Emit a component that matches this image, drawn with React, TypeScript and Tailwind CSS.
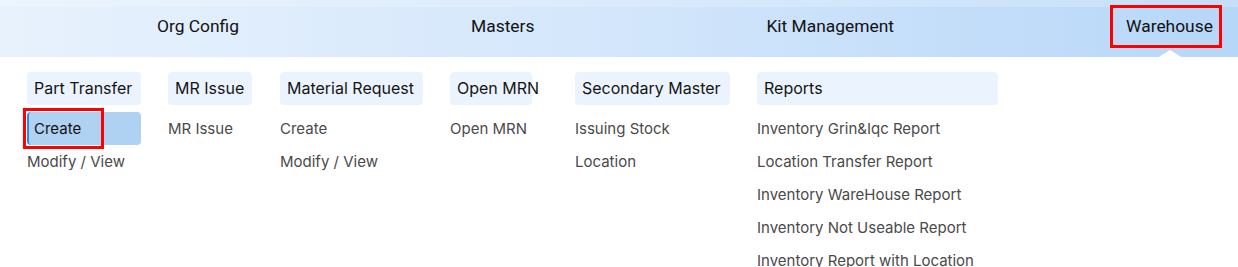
import React from 'react';

type Column = {
  title: string;
  items: string[];
  width: string;
  gap: string;
  active?: number;
};

const navItems = ['Org Config', 'Masters', 'Kit Management', 'Warehouse'];

const columns: Column[] = [
  { title: 'Part Transfer', items: ['Create', 'Modify / View'], width: 'w-[114px]', gap: 'mr-[27px]', active: 0 },
  { title: 'MR Issue', items: ['MR Issue'], width: 'w-[84px]', gap: 'mr-[28px]' },
  { title: 'Material Request', items: ['Create', 'Modify / View'], width: 'w-[143px]', gap: 'mr-[27px]' },
  { title: 'Open MRN', items: ['Open MRN'], width: 'w-[82px]', gap: 'mr-[43px]' },
  { title: 'Secondary Master', items: ['Issuing Stock', 'Location'], width: 'w-[155px]', gap: 'mr-[27px]' },
  {
    title: 'Reports',
    items: [
      'Inventory Grin&Iqc Report',
      'Location Transfer Report',
      'Inventory WareHouse Report',
      'Inventory Not Useable Report',
      'Inventory Report with Location',
    ],
    width: 'w-[241px]',
    gap: '',
  },
];

function TopNav() {
  return (
    <div className="relative h-[57px] bg-gradient-to-r from-[#e8f2fd] via-[#d3e6fb] to-[#b7d7f8] font-['Roboto',sans-serif]">
      <div className="absolute inset-x-0 top-0 h-[7px] bg-white/20" />
      <div className="flex h-full items-start pl-[141px] pt-[5px] gap-[200px]">
        {navItems.map((label) => {
          const selected = label === 'Warehouse';
          return (
            <div key={label} className="relative flex h-[43px] items-center px-4 text-[17.4px] text-[#111] whitespace-nowrap">
              {label}
              {selected && (
                <>
                  <span className="pointer-events-none absolute left-0 top-0 h-[43px] w-[112px] border-[3px] border-[#ff0000]" />
                  <span className="absolute left-[47px] top-[45px] border-x-[13px] border-b-[8px] border-x-transparent border-b-white" />
                </>
              )}
            </div>
          );
        })}
      </div>
    </div>
  );
}

function MenuColumn({ col }: { col: Column }) {
  return (
    <div className={`flex flex-col ${col.width} ${col.gap}`}>
      <div className="flex h-[33px] items-center rounded-[4px] bg-[#ebf4fe] px-[7px] pb-px text-[16px] text-[#151515] whitespace-nowrap">
        {col.title}
      </div>
      <div className="mt-[7px] flex flex-col">
        {col.items.map((item, i) =>
          i === col.active ? (
            <div
              key={item}
              className="relative flex h-[33px] items-center rounded-[4px] border-l-2 border-[#2f86e8] bg-[#b0d2f2] pl-[5px] pt-px text-[15px] text-[#111]"
            >
              {item}
              <span className="pointer-events-none absolute -left-[6px] -top-[4px] h-[41px] w-[81px] border-[3px] border-[#ff0000]" />
            </div>
          ) : (
            <div key={item} className="flex h-[33px] items-center whitespace-nowrap pt-px text-[15px] text-[#4a4a4a]">
              {item}
            </div>
          ),
        )}
      </div>
    </div>
  );
}

export default function App() {
  return (
    <div className="h-[267px] w-[1238px] overflow-hidden bg-white">
      <TopNav />
      <div className="flex items-start pl-[27px] pt-[15px] font-['Inter',sans-serif]">
        {columns.map((col) => (
          <MenuColumn key={col.title} col={col} />
        ))}
      </div>
    </div>
  );
}
